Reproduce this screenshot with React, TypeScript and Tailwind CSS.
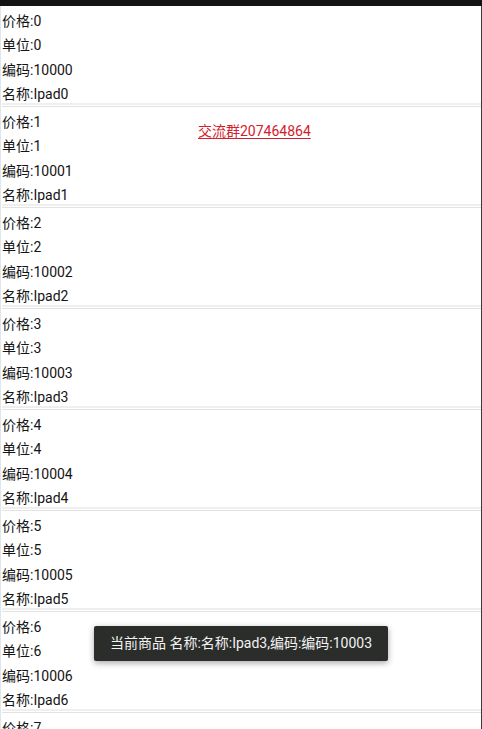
import React from "react";

const ITEMS = Array.from({ length: 8 }, (_, i) => i);

function GoodsItem({ n }: { n: number }) {
  return (
    <div className="flex flex-col">
      <div className="pt-[3px]">
        <div className="h-6 leading-6">价格:{n}</div>
        <div className="h-6 leading-6">单位:{n}</div>
        <div className="h-[25px] leading-6 pt-[1px]">编码:{10000 + n}</div>
        <div className="h-[21px] leading-6">名称:Ipad{n}</div>
      </div>
      <div className="h-[2px] bg-[#efefef]" />
      <div className="h-[1px] bg-white" />
      <div className="h-[1px] bg-[#e2e2e2]" />
    </div>
  );
}

export default function App() {
  return (
    <div
      className="relative h-[729px] w-[482px] overflow-hidden bg-white text-[14px] text-[#141414]"
      style={{ fontFamily: 'Roboto, "Noto Sans CJK SC", sans-serif' }}
    >
      <div className="h-[6px] bg-[#141414]" />
      <div className="flex border-l border-[#dce7ef] border-r border-r-[#3a3a3a]">
        <div className="flex flex-1 flex-col pl-[1px]">
          {ITEMS.map((n) => (
            <GoodsItem key={n} n={n} />
          ))}
        </div>
      </div>

      {/* link over list */}
      <a className="absolute left-[198px] top-[121px] leading-5 text-[#d4202c] underline underline-offset-2">
        交流群207464864
      </a>

      {/* toast */}
      <div className="absolute left-[94px] top-[626px] flex h-[35px] w-[294px] items-center justify-center rounded-[2px] bg-[#2b2d2b] text-[#f2f2f2] shadow-[0_2px_6px_rgba(0,0,0,0.35)]">
        当前商品 名称:名称:Ipad3,编码:编码:10003
      </div>
    </div>
  );
}
